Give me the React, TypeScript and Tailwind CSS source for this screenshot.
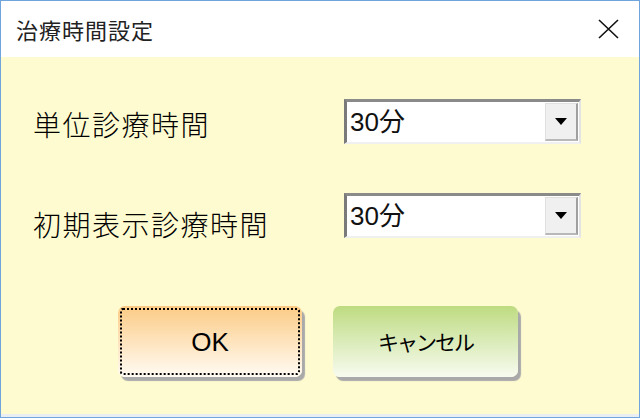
import React from "react";

function Select({ value }: { value: string }) {
  return (
    <div className="w-[237px] h-[45px] border-t-[3px] border-l-[3px] border-b-[2px] border-r-[2px] border-t-[#8a8a8a] border-l-[#7a7a7a] border-b-[#f0f0f0] border-r-[#e4e4e4] bg-white flex items-stretch">
      <div className="flex-1 flex items-center pl-[3px] text-[26px] text-[#111] leading-none" style={{ fontFamily: '"Liberation Sans", "Noto Sans CJK JP", sans-serif' }}>
        {value}
      </div>
      <div className="w-[33px] my-[1px] mr-[1px] bg-[#f0f0f0] border-r-[2px] border-b-[2px] border-r-[#a0a0a0] border-b-[#b8b8b8] border-l border-t border-l-[#e0e0e0] border-t-[#e0e0e0] flex items-center justify-center">
        <svg width="12" height="7" viewBox="0 0 12 7">
          <path d="M0 0 L12 0 L6 7 Z" fill="#000" />
        </svg>
      </div>
    </div>
  );
}

export default function App() {
  const jp = { fontFamily: '"Noto Sans CJK JP", sans-serif' };
  return (
    <div className="w-[640px] h-[418px] border border-[#6fa5da] flex flex-col overflow-hidden" style={jp}>
      <div className="h-[56px] bg-white flex items-center justify-between pl-[15px] pr-[20px] shrink-0">
        <span className="text-[22px] text-[#222] leading-none tracking-[1px]" style={jp}>治療時間設定</span>
        <svg width="21" height="20" viewBox="0 0 21 20">
          <path d="M1 1 L20 19 M20 1 L1 19" stroke="#111" strokeWidth="1.6" fill="none" />
        </svg>
      </div>
      <div className="flex-1 bg-[#fffbd0] flex flex-col">
        <div className="flex flex-col pt-[42px] pl-[32px] gap-[49px]">
          <div className="flex items-start">
            <span className="w-[311px] mt-[11px] text-[28px] font-light leading-none text-black tracking-[1.5px]" style={jp}>単位診療時間</span>
            <Select value="30分" />
          </div>
          <div className="flex items-start">
            <span className="w-[311px] mt-[17px] text-[28px] font-light leading-none text-black tracking-[1.5px]" style={jp}>初期表示診療時間</span>
            <Select value="30分" />
          </div>
        </div>
        <div className="flex pl-[117px] gap-[31px] mt-[68px]">
          <div className="relative w-[184px] h-[71px] rounded-[7px] bg-gradient-to-b from-[#fbcb84] to-[#fffbf3] shadow-[3px_4px_1px_#a9a9a9] flex items-center justify-center">
            <div className="absolute inset-[2px] border-2 border-dotted border-black rounded-[3px]" />
            <span className="text-[26px] text-black leading-none" style={{ fontFamily: '"Liberation Sans", sans-serif' }}>OK</span>
          </div>
          <div className="w-[185px] h-[71px] rounded-[7px] bg-gradient-to-b from-[#bedb80] to-[#f8fbef] shadow-[3px_4px_1px_#a9a9a9] flex items-center justify-center">
            <span className="text-[21px] text-black leading-none tracking-[-2px]" style={jp}>キャンセル</span>
          </div>
        </div>
        <div className="flex-1" />
        <div className="h-[3px] bg-[#e8eef2]" />
      </div>
    </div>
  );
}
